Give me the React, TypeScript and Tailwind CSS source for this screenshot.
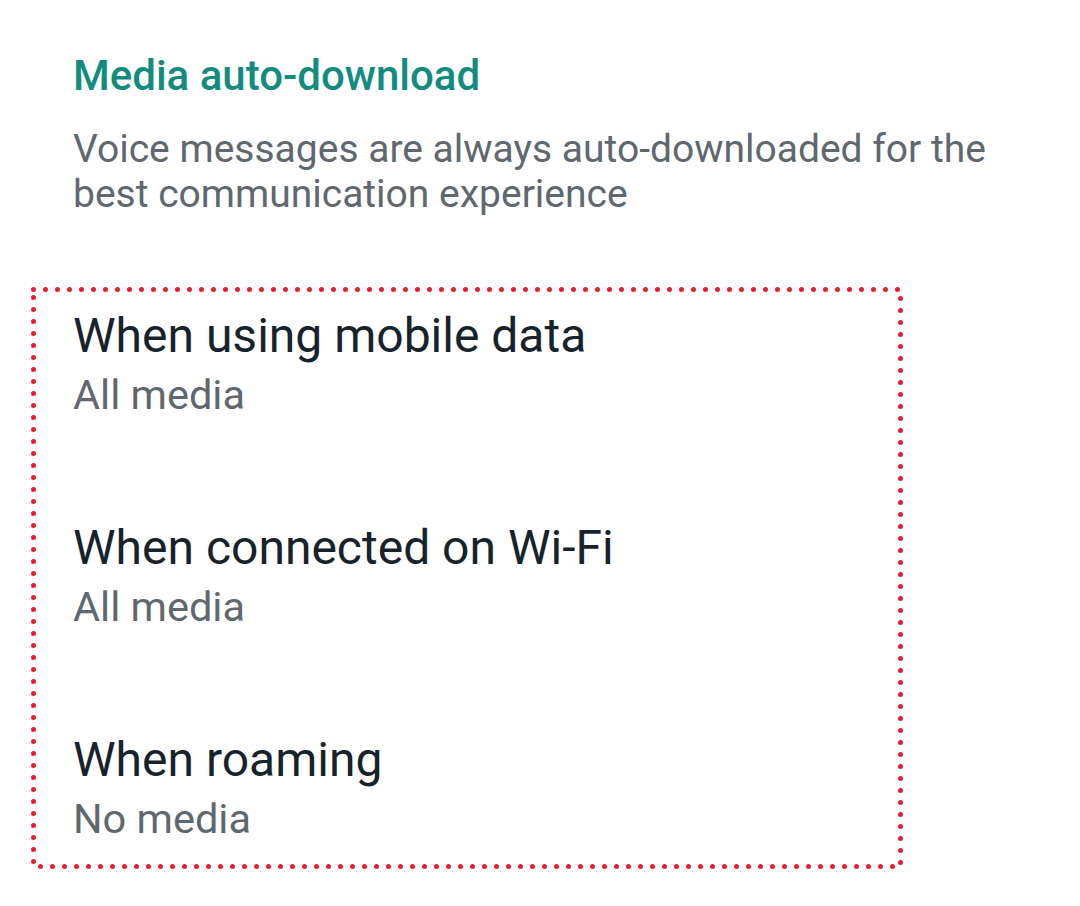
import React from "react";

const rows = [
  { title: "When using mobile data", sub: "All media" },
  { title: "When connected on Wi-Fi", sub: "All media" },
  { title: "When roaming", sub: "No media" },
];

export default function App() {
  return (
    <div
      className="w-[1080px] h-[906px] bg-white overflow-hidden"
      style={{ fontFamily: "Roboto, 'Noto Sans', sans-serif" }}
    >
      <div className="pl-[73px] pt-[51px]">
        <h2 className="text-[42px] leading-[50px] font-medium text-[#128c7e]">
          Media auto-download
        </h2>
        <p className="mt-[26px] w-[960px] text-[39px] leading-[45px] text-[#5e686e]">
          Voice messages are always auto-downloaded for the best communication experience
        </p>
      </div>
      <div className="relative ml-[31px] mt-[70px] w-[872px] h-[582px] pl-[42px] pt-[21px]">
        <svg className="absolute inset-0 pointer-events-none" width="872" height="582">
          <rect
            x="2.5"
            y="2.5"
            width="867"
            height="577"
            fill="none"
            stroke="#ef1c2c"
            strokeWidth="5"
            strokeLinecap="round"
            strokeDasharray="0 12"
          />
        </svg>
        <div className="flex flex-col">
          {rows.map((r) => (
            <div key={r.title} className="h-[212px]">
              <div className="text-[48px] leading-[56px] text-[#17232b]">{r.title}</div>
              <div className="mt-[7px] text-[41.5px] leading-[48px] text-[#5e686e]">{r.sub}</div>
            </div>
          ))}
        </div>
      </div>
    </div>
  );
}
